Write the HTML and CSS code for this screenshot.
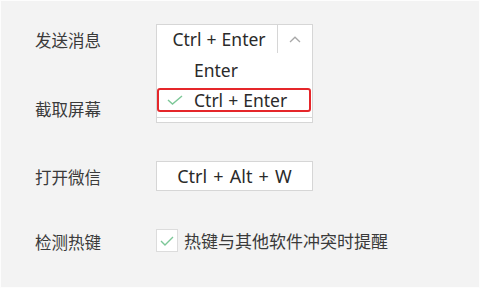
FILE: index.html
```html
<!DOCTYPE html>
<html lang="zh-CN">
<head>
<meta charset="utf-8">
<title>快捷键</title>
<link rel="stylesheet" href="styles.css">
</head>
<body>
<div class="window">
  <div class="row">
    <span class="label">发送消息</span>
    <div class="combo">
      <div class="combo-head">
        <span class="combo-value">Ctrl + Enter</span>
        <span class="combo-arrow">
          <svg width="12" height="7" viewBox="0 0 12 7"><polyline points="1,6 6,1.2 11,6" fill="none" stroke="#a8a8a8" stroke-width="1.3"/></svg>
        </span>
      </div>
      <div class="popup">
        <div class="item"><span class="tick"></span><span>Enter</span></div>
        <div class="item selected">
          <span class="tick">
            <svg width="16" height="10" viewBox="0 0 16 10"><polyline points="1,5 5.5,9 15,1" fill="none" stroke="#7cc797" stroke-width="1.4"/></svg>
          </span>
          <span>Ctrl + Enter</span>
        </div>
      </div>
    </div>
  </div>
  <div class="row">
    <span class="label">截取屏幕</span>
    <div class="field"></div>
  </div>
  <div class="row">
    <span class="label">打开微信</span>
    <div class="field">Ctrl + Alt + W</div>
  </div>
  <div class="row row-check">
    <span class="label">检测热键</span>
    <span class="checkbox">
      <svg width="14" height="10" viewBox="0 0 14 10"><polyline points="1,5 5,9 13,1" fill="none" stroke="#7cc797" stroke-width="1.4"/></svg>
    </span>
    <span class="check-text">热键与其他软件冲突时提醒</span>
  </div>
</div>
</body>
</html>
```

FILE: styles.css
```css
* { box-sizing: border-box; }
html, body { margin: 0; padding: 0; }
body {
  width: 480px;
  height: 288px;
  background: #fbfbfb;
  font-family: "Noto Sans", "Noto Sans CJK SC", sans-serif;
  color: #333333;
  overflow: hidden;
}
.window {
  width: 480px;
  height: 288px;
  margin: 0;
  border: 1px solid #fdfdfd;
  background: #f3f3f3;
  padding: 23px 0 0 34px;
  display: flex;
  flex-direction: column;
  gap: 38.5px;
}
.row {
  display: flex;
  align-items: center;
  height: 30px;
}
.label {
  width: 121px;
  flex: none;
  font-family: "Noto Sans CJK SC", sans-serif;
  font-size: 16.5px;
  color: #3a3a3a;
  padding-top: 2px;
}
.combo {
  position: relative;
  width: 157px;
  height: 30px;
  z-index: 2;
}
.combo-head {
  display: flex;
  height: 30px;
  background: #ffffff;
  border: 1px solid #d6d6d6;
}
.combo-value {
  width: 120px;
  display: flex;
  align-items: center;
  justify-content: center;
  font-size: 17.5px;
  word-spacing: 0.5px;
  padding-left: 4px;
  color: #2a2a2a;
}
.combo-arrow {
  flex: 1;
  display: flex;
  align-items: center;
  justify-content: center;
  border-left: 1px solid #d6d6d6;
}
.popup {
  position: absolute;
  left: 0;
  top: 29px;
  width: 157px;
  height: 65px;
  background: #ffffff;
  border: 1px solid #d6d6d6;
  border-top: none;
  padding: 0 1px;
}
.item {
  display: flex;
  align-items: center;
  height: 34px;
  font-size: 17.5px;
  word-spacing: 0.5px;
  color: #2a2a2a;
}
.item.selected {
  height: 24px;
  margin-top: 1px;
  border: 2px solid #e5262a;
  border-radius: 3px;
  margin-left: -1px;
}
.tick {
  width: 36px;
  flex: none;
  display: flex;
  justify-content: flex-start;
  padding-left: 8px;
}
.item.selected .tick { width: 35px; }
.field {
  width: 157px;
  height: 30px;
  background: #ffffff;
  border: 1px solid #d6d6d6;
  display: flex;
  align-items: center;
  justify-content: center;
  font-size: 18px;
  word-spacing: 1.5px;
  color: #2a2a2a;
}
.row-check { height: 22px; }
.checkbox {
  width: 22px;
  height: 23px;
  flex: none;
  background: #ffffff;
  border: 1px solid #dcdcdc;
  display: flex;
  align-items: center;
  justify-content: center;
}
.check-text {
  margin-left: 6px;
  font-family: "Noto Sans CJK SC", sans-serif;
  font-size: 17px;
  color: #3a3a3a;
}
```
